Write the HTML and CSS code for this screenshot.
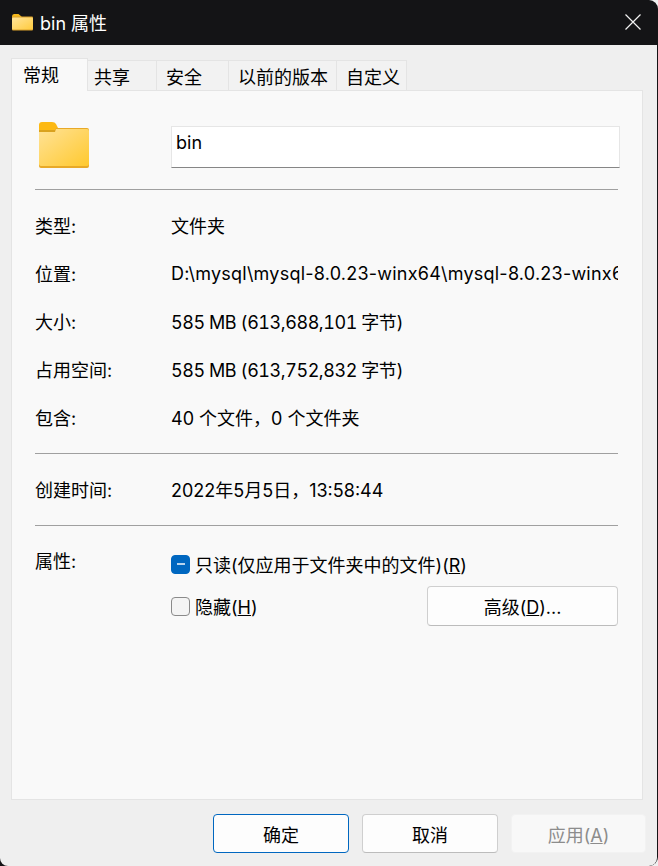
FILE: index.html
```html
<!DOCTYPE html>
<html lang="zh-CN">
<head>
    <meta charset="UTF-8">
    <title>bin 属性</title>
    <link rel="stylesheet" href="styles.css">
</head>
<body>
    <div class="window">
        <div class="titlebar">
            <svg class="title-icon" width="22" height="18" viewBox="0 0 22 18">
                <path d="M1 3.5 Q1 1 3 1 H7.5 L10.5 3.5 V6 H1Z" fill="#f5b81c"/>
                <rect x="1" y="3.5" width="21" height="14" rx="1" fill="#d9a02b"/>
                <rect x="1" y="4.5" width="21" height="12" rx="1" fill="url(#titleFill)"/>
                <defs>
                    <linearGradient id="titleFill" x1="0" y1="0" x2="1" y2="1">
                        <stop offset="0" stop-color="#ffe49a"/>
                        <stop offset="1" stop-color="#ffcb3d"/>
                    </linearGradient>
                </defs>
            </svg>
            <span class="title-text">bin 属性</span>
            <svg class="close-icon" width="16" height="16" viewBox="0 0 16 16">
                <path d="M.5.5 15.5 15.5M15.5.5 .5 15.5" stroke="#f2f2f2" stroke-width="1.2" fill="none"/>
            </svg>
        </div>

        <div class="content">
            <div class="tabs">
                <div class="tab active">常规</div>
                <div class="tab tab-share">共享</div>
                <div class="tab tab-safe">安全</div>
                <div class="tab tab-old">以前的版本</div>
                <div class="tab tab-custom">自定义</div>
            </div>

            <div class="panel">
                <div class="name-row">
                    <svg class="folder-icon" width="50" height="46" viewBox="0 0 50 46">
                        <defs>
                            <linearGradient id="folderFill" x1="0" y1="0" x2="1" y2="1">
                                <stop offset="0" stop-color="#ffe296"/>
                                <stop offset="1" stop-color="#ffc92f"/>
                            </linearGradient>
                        </defs>
                        <path d="M0 3 Q0 0 3 0 H13 Q16 0 17 2 L19 6 V10 H0Z" fill="#fdb913"/>
                        <path d="M0 8 H16 L19 6 V10 H0Z" fill="#d9a21f"/>
                        <path d="M17 6 H48 Q50 6 50 8 V44 Q50 46 48 46 H2 Q0 46 0 44 V10 H16Z" fill="#e8a928"/>
                        <path d="M17 7 H48 Q50 7 50 9 V42 Q50 44 48 44 H2 Q0 44 0 42 V10 H16Z" fill="url(#folderFill)"/>
                    </svg>
                    <div class="name-box">bin</div>
                </div>
                <div class="rule"></div>

                <div class="info-group">
                    <div class="info-row"><span class="label">类型:</span><span class="value">文件夹</span></div>
                    <div class="info-row"><span class="label">位置:</span><span class="value value-path">D:\mysql\mysql-8.0.23-winx64\mysql-8.0.23-winx64\bin</span></div>
                    <div class="info-row"><span class="label">大小:</span><span class="value value-size">585 MB (613,688,101 字节)</span></div>
                    <div class="info-row"><span class="label">占用空间:</span><span class="value value-size">585 MB (613,752,832 字节)</span></div>
                    <div class="info-row"><span class="label">包含:</span><span class="value">40 个文件，0 个文件夹</span></div>
                </div>
                <div class="rule"></div>

                <div class="info-group">
                    <div class="info-row"><span class="label">创建时间:</span><span class="value">2022年5月5日，13:58:44</span></div>
                </div>
                <div class="rule"></div>

                <div class="attrs">
                    <span class="label attrs-label">属性:</span>
                    <div class="attrs-main">
                        <div class="check-row">
                            <span class="checkbox mixed"><span class="dash"></span></span>
                            <span>只读(仅应用于文件夹中的文件)(<u>R</u>)</span>
                        </div>
                        <div class="check-row hidden-row">
                            <span class="checkbox"></span>
                            <span class="hidden-label">隐藏(<u>H</u>)</span>
                            <button class="btn btn-advanced">高级(<u>D</u>)...</button>
                        </div>
                    </div>
                </div>
            </div>

            <div class="footer">
                <button class="btn btn-ok">确定</button>
                <button class="btn">取消</button>
                <button class="btn btn-disabled">应用(<u>A</u>)</button>
            </div>
        </div>
    </div>
</body>
</html>
```

FILE: styles.css
```css
* {
    box-sizing: border-box;
}

html, body {
    margin: 0;
    height: 100%;
    background: #f0f0f0;
}

body {
    font-family: "Inter", "Noto Sans CJK SC", sans-serif;
    font-size: 18px;
    color: #000;
    overflow: hidden;
}

.window {
    width: 658px;
    height: 866px;
    display: flex;
    flex-direction: column;
    background: #141416;
    border-top-right-radius: 9px;
    border-bottom-right-radius: 9px;
    overflow: hidden;
}

.titlebar {
    height: 45px;
    flex: none;
    display: flex;
    align-items: center;
    padding: 0 17px 0 11px;
    color: #fff;
}

.title-icon {
    flex: none;
    margin-top: -2px;
}

.title-text {
    margin-left: 7px;
    margin-top: -1px;
}

.close-icon {
    margin-left: auto;
    margin-top: -1px;
}

.content {
    flex: 1;
    display: flex;
    flex-direction: column;
    margin-right: 1px;
    padding: 13px 14px 0 11px;
    background: #efefef;
    border-bottom-left-radius: 8px;
    border-bottom-right-radius: 8px;
}

.tabs {
    height: 32px;
    flex: none;
    display: flex;
    align-items: flex-end;
}

.tab {
    height: 30px;
    padding: 2px 0 0 9px;
    background: #f2f2f2;
    border: 1px solid #e4e4e4;
    border-bottom: 0;
    border-left: 0;
}

.tab.active {
    width: 77px;
    height: 33px;
    margin-bottom: -1px;
    padding: 2px 0 0 11px;
    background: #f9f9f9;
    border-left: 1px solid #e4e4e4;
    position: relative;
    z-index: 1;
}

.tab-share { width: 69px; padding-left: 6px; }
.tab-safe { width: 72px; }
.tab-old { width: 108px; }
.tab-custom { width: 70px; }

.panel {
    height: 710px;
    flex: none;
    padding: 32px 24px 0 23px;
    background: #f9f9f9;
    border: 1px solid #e4e4e4;
}

.name-row {
    height: 46px;
    display: flex;
    align-items: flex-start;
    padding-left: 4px;
}

.folder-icon {
    flex: none;
    margin-top: -1px;
}

.name-box {
    width: 449px;
    height: 42px;
    flex: none;
    margin-left: 82px;
    margin-top: 3px;
    padding: 5px 4px 0;
    background: #fff;
    border: 1px solid #e6e6e6;
    border-bottom: 1px solid #868686;
    overflow: hidden;
}

.rule {
    height: 1px;
    background: #a0a0a0;
}

.name-row + .rule {
    margin-top: 20px;
}

.info-group {
    padding: 11px 0 12px;
}

.info-row {
    height: 48px;
    display: flex;
    align-items: center;
}

.label {
    width: 136px;
    flex: none;
}

.value {
    width: 449px;
    white-space: nowrap;
    overflow: hidden;
}

.value-path {
    letter-spacing: 0.23px;
}

.value-size {
    font-variant-numeric: tabular-nums;
    letter-spacing: -0.45px;
}

.attrs {
    display: flex;
    padding-top: 17px;
}

.attrs-label {
    line-height: 38px;
}

.attrs-main {
    flex: 1;
    padding-top: 3px;
}

.check-row {
    height: 36px;
    display: flex;
    align-items: center;
    gap: 5px;
}

.hidden-row {
    height: 48px;
}

.checkbox {
    width: 19px;
    height: 19px;
    flex: none;
    display: flex;
    align-items: center;
    justify-content: center;
    background: #f4f4f4;
    border: 1px solid #8a8a8a;
    border-radius: 4px;
}

.checkbox.mixed {
    background: #0067c0;
    border-color: #0067c0;
}

.dash {
    width: 8px;
    height: 2px;
    background: #b8d4ee;
}

.btn {
    width: 136px;
    height: 39px;
    flex: none;
    padding: 0;
    font-family: inherit;
    font-size: inherit;
    color: #000;
    background: #fdfdfd;
    border: 1px solid #cfcfcf;
    border-bottom-color: #bcbcbc;
    border-radius: 4px;
}

.btn-advanced {
    width: 191px;
    height: 40px;
    margin-left: auto;
}

.btn-ok {
    border-color: #0067c0;
}

.btn-disabled {
    width: 135px;
    color: #8c8c8c;
    background: #f8f8f8;
    border-color: #f2f2f2;
}

.footer {
    display: flex;
    justify-content: flex-end;
    gap: 13px;
    padding-top: 14px;
    margin-right: -3px;
}
```
